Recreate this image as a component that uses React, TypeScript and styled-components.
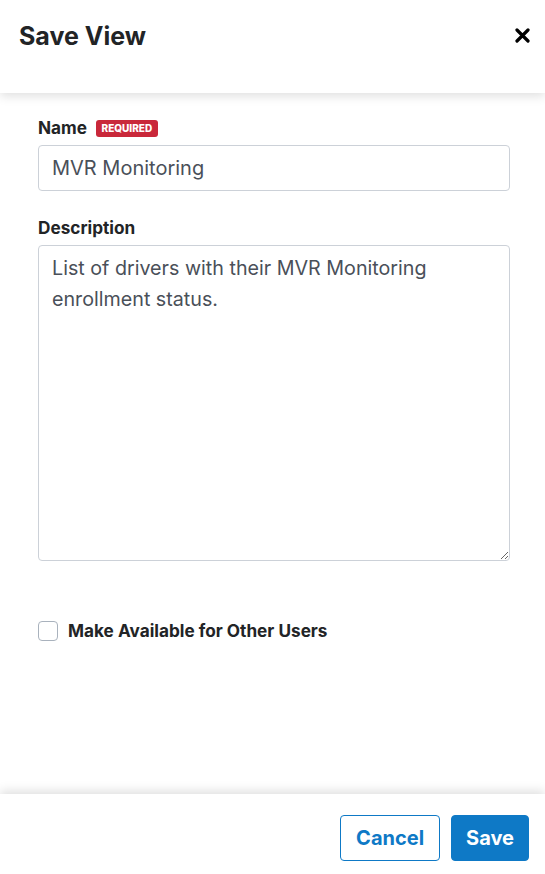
import React from "react";
import styled, { createGlobalStyle } from "styled-components";

const GlobalStyle = createGlobalStyle`
  html, body {
    margin: 0;
    padding: 0;
    background: #fff;
  }
  body {
    font-family: Inter, "Liberation Sans", sans-serif;
    color: #222426;
  }
`;

const Modal = styled.div`
  width: 545px;
  height: 874px;
  display: flex;
  flex-direction: column;
  background: #fff;
  overflow: hidden;
`;

const Header = styled.header`
  height: 93px;
  flex-shrink: 0;
  display: flex;
  align-items: flex-start;
  justify-content: space-between;
  padding: 20px 15px 0 19px;
  box-sizing: border-box;
  box-shadow: 0 3px 10px rgba(0, 0, 0, 0.13);
  position: relative;
  z-index: 1;
`;

const Title = styled.h2`
  margin: 0;
  font-size: 25px;
  line-height: 32px;
  font-weight: 700;
  color: #222426;
`;

const CloseButton = styled.button`
  border: 0;
  background: none;
  padding: 0;
  margin-top: 7px;
  width: 16px;
  height: 16px;
  cursor: pointer;
  display: flex;
  align-items: center;
  justify-content: center;
`;

const Body = styled.div`
  flex: 1;
  padding: 23px 35px 0 38px;
  display: flex;
  flex-direction: column;
`;

const Field = styled.div<{ $gap?: number }>`
  display: flex;
  flex-direction: column;
  gap: 5px;
  margin-bottom: ${(p) => p.$gap ?? 0}px;
`;

const LabelRow = styled.div`
  display: flex;
  align-items: center;
  gap: 9px;
`;

const Label = styled.label`
  font-size: 17.2px;
  line-height: 24px;
  font-weight: 700;
  color: #222426;
`;

const Badge = styled.span`
  background: #c9283a;
  color: #fff;
  font-size: 10px;
  font-weight: 800;
  line-height: 17px;
  padding: 0 5.5px;
  border-radius: 3px;
`;

const inputBase = `
  font-family: Inter, "Liberation Sans", sans-serif;
  color: #4a5059;
  border: 1px solid #ccd1d8;
  border-radius: 4px;
  box-sizing: border-box;
  width: 100%;
  outline: none;
  background: #fff;
`;

const TextInput = styled.input`
  ${inputBase}
  font-size: 20px;
  height: 46px;
  padding: 0 13px;
`;

const TextArea = styled.textarea`
  ${inputBase}
  font-size: 19.7px;
  height: 316px;
  padding: 7px 13px;
  line-height: 31px;
  resize: vertical;
`;

const CheckRow = styled.label`
  display: flex;
  align-items: center;
  gap: 10px;
  margin-top: 59px;
  font-size: 17.2px;
  font-weight: 700;
  color: #222426;
  cursor: pointer;
`;

const Box = styled.span`
  width: 18px;
  height: 18px;
  border: 1px solid #a9b2bd;
  border-radius: 4px;
  background: #fff;
  flex-shrink: 0;
`;

const Footer = styled.footer`
  height: 80px;
  flex-shrink: 0;
  display: flex;
  justify-content: flex-end;
  align-items: flex-start;
  gap: 11px;
  padding: 21px 16px 0;
  box-sizing: border-box;
  box-shadow: 0 -3px 10px rgba(0, 0, 0, 0.13);
  position: relative;
  z-index: 1;
`;

const Button = styled.button<{ $primary?: boolean }>`
  height: 46px;
  padding: 0 ${(p) => (p.$primary ? 14 : 15)}px;
  border-radius: 4px;
  font-family: Inter, "Liberation Sans", sans-serif;
  font-size: 20px;
  font-weight: 700;
  cursor: pointer;
  border: 1px solid #0e79c6;
  background: ${(p) => (p.$primary ? "#0e79c6" : "#fff")};
  color: ${(p) => (p.$primary ? "#fff" : "#0e79c6")};
`;

const CloseIcon = () => (
  <svg width="15" height="15" viewBox="0 0 15 15">
    <path d="M2 2 L13 13 M13 2 L2 13" stroke="#000" strokeWidth="3.2" strokeLinecap="round" />
  </svg>
);

export default function App() {
  return (
    <>
      <GlobalStyle />
      <Modal>
        <Header>
          <Title>Save View</Title>
          <CloseButton aria-label="Close">
            <CloseIcon />
          </CloseButton>
        </Header>
        <Body>
          <Field $gap={25}>
            <LabelRow>
              <Label>Name</Label>
              <Badge>REQUIRED</Badge>
            </LabelRow>
            <TextInput defaultValue="MVR Monitoring" />
          </Field>
          <Field>
            <Label>Description</Label>
            <TextArea defaultValue="List of drivers with their MVR Monitoring enrollment status." />
          </Field>
          <CheckRow>
            <Box />
            Make Available for Other Users
          </CheckRow>
        </Body>
        <Footer>
          <Button>Cancel</Button>
          <Button $primary>Save</Button>
        </Footer>
      </Modal>
    </>
  );
}
